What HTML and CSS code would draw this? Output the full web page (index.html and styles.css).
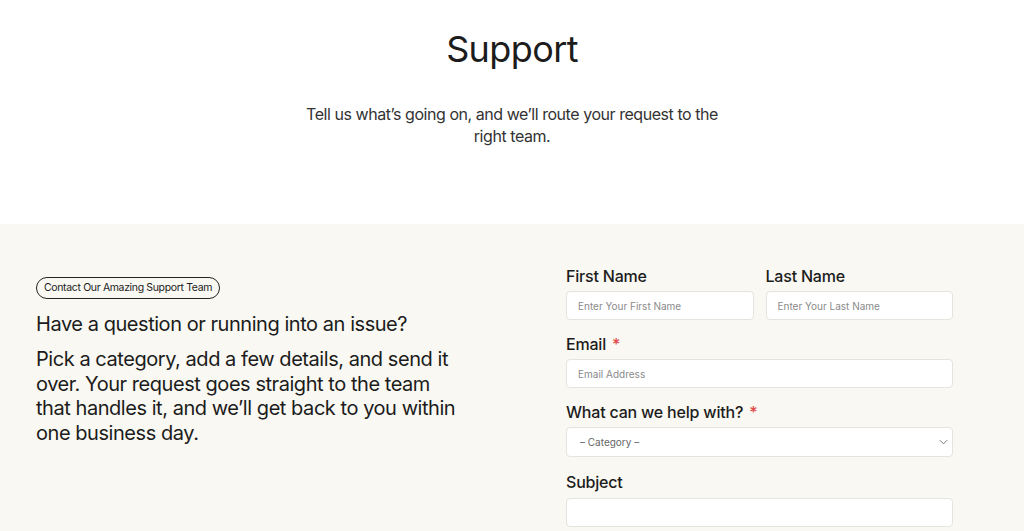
FILE: index.html
```html
<!DOCTYPE html>
<html lang="en">
<head>
<meta charset="utf-8">
<title>Support</title>
<link rel="stylesheet" href="styles.css">
</head>
<body>
<header class="hero">
  <h1 class="hero-title">Support</h1>
  <p class="hero-sub">Tell us what’s going on, and we’ll route your request to the right team.</p>
</header>
<section class="contact">
  <div class="intro">
    <span class="pill">Contact Our Amazing Support Team</span>
    <h2 class="intro-title">Have a question or running into an issue?</h2>
    <p class="intro-text">Pick a category, add a few details, and send it over. Your request goes straight to the team that handles it, and we’ll get back to you within one business day.</p>
  </div>
  <form class="form">
    <div class="row">
      <label class="field">
        <span class="label">First Name</span>
        <input class="input" type="text" placeholder="Enter Your First Name">
      </label>
      <label class="field">
        <span class="label">Last Name</span>
        <input class="input" type="text" placeholder="Enter Your Last Name">
      </label>
    </div>
    <label class="field">
      <span class="label">Email <span class="req">*</span></span>
      <input class="input" type="email" placeholder="Email Address">
    </label>
    <label class="field">
      <span class="label">What can we help with? <span class="req">*</span></span>
      <span class="select-wrap">
        <select class="input select">
          <option>– Category –</option>
        </select>
        <svg class="chev" viewBox="0 0 10 6" width="9" height="6"><path d="M1 1l4 4 4-4" fill="none" stroke="#777" stroke-width="1.1"/></svg>
      </span>
    </label>
    <label class="field field-subject">
      <span class="label">Subject</span>
      <input class="input" type="text">
    </label>
  </form>
</section>
</body>
</html>
```
FILE: styles.css
```css
* { box-sizing: border-box; }
html, body { margin: 0; padding: 0; }
body {
  font-family: Inter, "Noto Sans", sans-serif;
  color: #1c1c1c;
  background: #fff;
}
.hero {
  text-align: center;
  padding: 27px 0 0;
  height: 224px;
}
.hero-title {
  margin: 0;
  font-size: 36px;
  font-weight: 400;
  letter-spacing: -0.6px;
  line-height: 44px;
}
.hero-sub {
  margin: 32px auto 0;
  max-width: 440px;
  font-size: 16px;
  line-height: 22px;
  color: #333;
  letter-spacing: -0.45px;
}
.contact {
  background: #f9f8f2;
  display: grid;
  grid-template-columns: 1fr 387px;
  column-gap: 80px;
  padding: 43px 71px 0 36px;
  min-height: 307px;
}
.intro { padding-top: 8px; }
.pill {
  display: inline-block;
  border: 1px solid #222;
  border-radius: 12px;
  padding: 3px 7px 4px;
  font-size: 10.5px;
  line-height: 13px;
  letter-spacing: -0.35px;
}
.intro-title {
  margin: 12px 0 0;
  font-size: 20px;
  font-weight: 400;
  line-height: 26px;
  letter-spacing: -0.45px;
}
.intro-text {
  margin: 10px 0 0;
  max-width: 430px;
  font-size: 20px;
  line-height: 24.5px;
  letter-spacing: -0.45px;
  color: #1c1c1c;
}
.form {
  display: flex;
  flex-direction: column;
  gap: 15px;
}
.row {
  display: grid;
  grid-template-columns: 1fr 1fr;
  gap: 12px;
}
.field {
  display: flex;
  flex-direction: column;
  gap: 5px;
}
.field-subject { margin-top: 1px; gap: 6px; }
.label {
  font-size: 16px;
  font-weight: 500;
  line-height: 19px;
  letter-spacing: -0.2px;
}
.req { color: #e04848; margin-left: 2px; }
.input {
  height: 29px;
  width: 100%;
  background: #fff;
  border: 1px solid #e6e4de;
  border-radius: 4px;
  padding: 0 11px;
  font-family: Inter, "Noto Sans", sans-serif;
  font-size: 10px;
  color: #555;
}
.input::placeholder { color: #8a8a8a; }
.select-wrap { position: relative; display: block; }
.select {
  appearance: none;
  -webkit-appearance: none;
  padding-left: 13px;
  height: 30px;
  color: #666;
}
.chev {
  position: absolute;
  right: 5px;
  top: 12px;
}
```
